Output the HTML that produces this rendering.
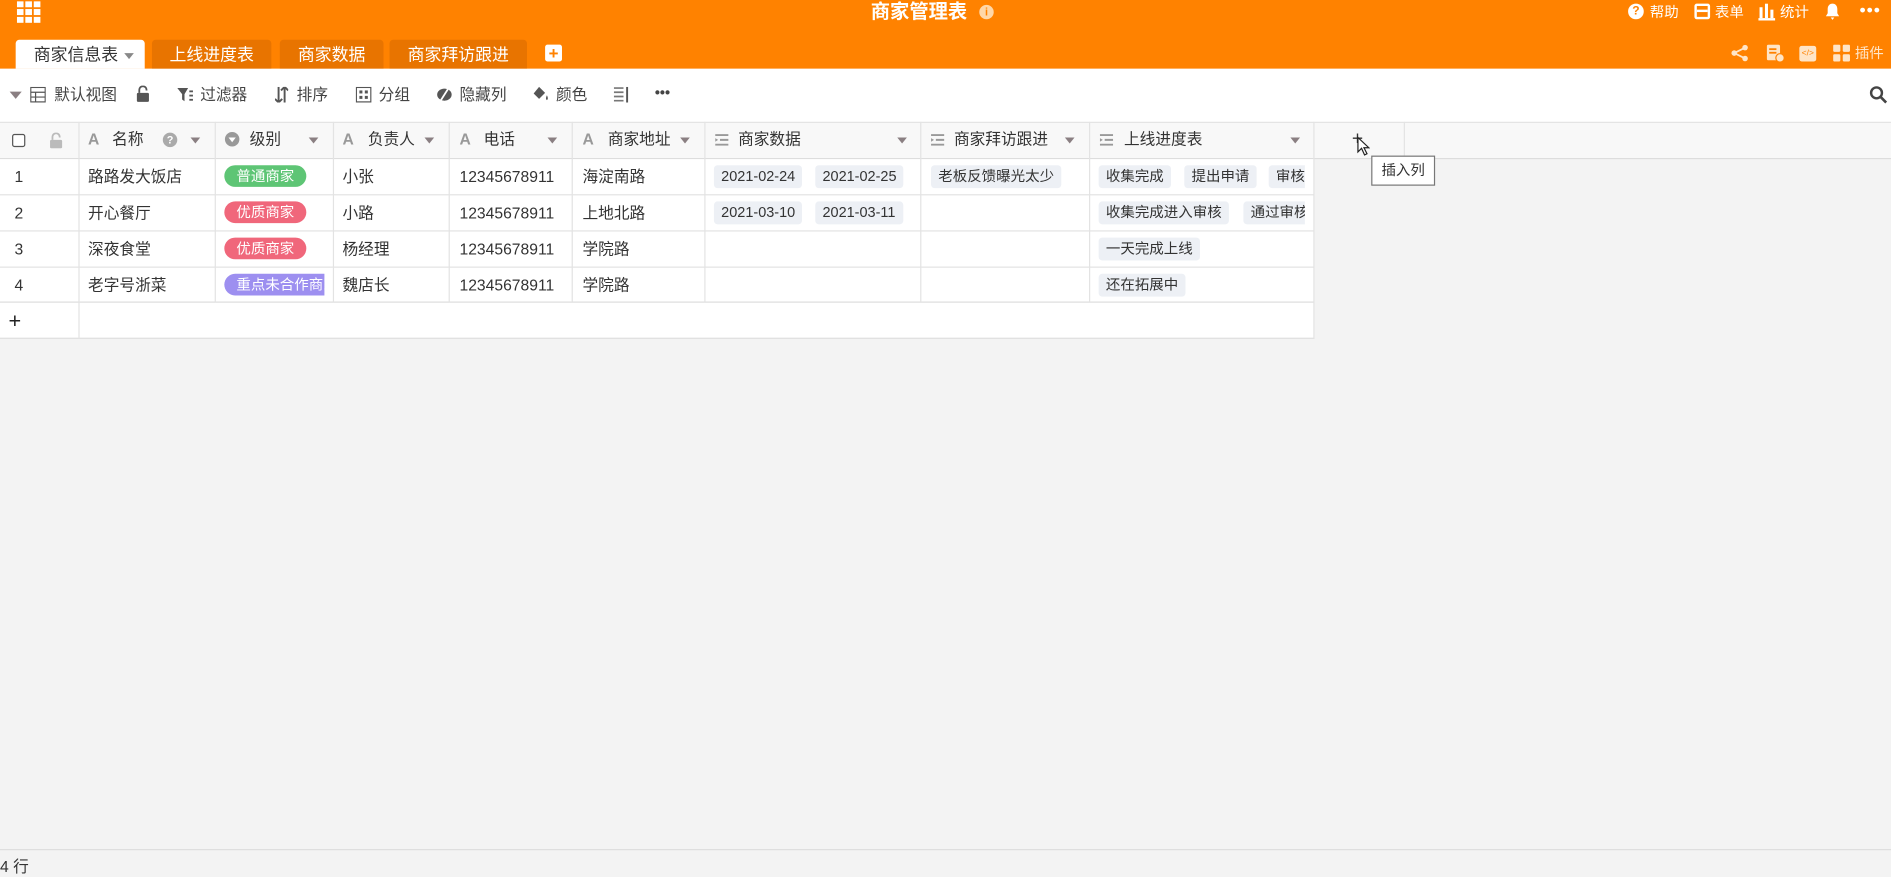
<!DOCTYPE html>
<html><head><meta charset="utf-8"><style>
*{box-sizing:border-box;margin:0;padding:0}
html,body{width:1891px;height:876px;overflow:hidden;background:#f3f3f3}
#w{position:absolute;left:0;top:0;width:1568px;height:726px;transform:scale(1.20599);transform-origin:0 0;font-family:"Liberation Sans","Noto Sans CJK SC",sans-serif;font-size:13px;color:#333}
.a{position:absolute}
.top{left:0;top:0;width:1568px;height:57px;background:#ff8200}
.tab{top:33px;height:24px;line-height:24px;font-size:14px;color:#fff;background:#e87400;border-radius:3px 3px 0 0;text-align:center}
.tb{top:70px;font-size:13px;color:#444;line-height:18px}
.hd{left:0;top:101px;width:1568px;height:31px;background:#f8f8f8;border-top:1px solid #e4e4e4;border-bottom:1px solid #ddd}
.vl{width:1px;background:#e3e3e3}
.hl{height:1px;background:#e3e3e3}
.ht{top:108px;font-size:13px;color:#333;line-height:16px}
.ca{top:108px;width:0;height:0;border-left:4px solid transparent;border-right:4px solid transparent;border-top:5px solid #8a7f82}
.ct{font-size:13px;line-height:16px}
.pill{height:18px;line-height:18px;border-radius:9px;color:#fff;font-size:12px;padding:0 10px;white-space:nowrap;overflow:hidden}
.tg{height:19px;line-height:19px;border-radius:3px;background:#edf0f5;font-size:12px;padding:0 6px;white-space:nowrap;color:#333}
.wi{color:#fff}
</style></head><body><div id="w">
<div class="a top"></div>
<!-- grid logo -->
<svg class="a" style="left:14px;top:1px" width="20" height="18" viewBox="0 0 20 18"><g fill="#fff"><rect x="0" y="0" width="5.5" height="5"/><rect x="7" y="0" width="5.5" height="5"/><rect x="14" y="0" width="5.5" height="5"/><rect x="0" y="6.5" width="5.5" height="5" /><rect x="7" y="6.5" width="5.5" height="5"/><rect x="14" y="6.5" width="5.5" height="5"/><rect x="0" y="13" width="5.5" height="5"/><rect x="7" y="13" width="5.5" height="5"/><rect x="14" y="13" width="5.5" height="5"/></g></svg>
<div class="a" style="left:722px;top:1px;font-size:16px;font-weight:bold;color:#fff;line-height:20px">商家管理表</div>
<div class="a" style="left:812px;top:4px;width:12px;height:12px;border-radius:6px;background:#ffd7a8;color:#ff8200;font-size:9px;line-height:12px;text-align:center;font-weight:bold">i</div>
<!-- right top -->
<div class="a" style="left:1350px;top:3px;width:13px;height:13px;border-radius:7px;background:#fff;color:#ff8200;font-size:10px;line-height:13px;text-align:center;font-weight:bold">?</div>
<div class="a wi" style="left:1368px;top:2px;font-size:12px;line-height:16px">帮助</div>
<div class="a" style="left:1405px;top:3px;width:13px;height:13px;border:2px solid #fff;border-radius:2px"></div>
<div class="a" style="left:1407px;top:8px;width:9px;height:2px;background:#fff"></div>
<div class="a wi" style="left:1422px;top:2px;font-size:12px;line-height:16px">表单</div>
<svg class="a" style="left:1458px;top:3px" width="14" height="14"><g fill="#fff"><rect x="1" y="3" width="2.5" height="9"/><rect x="5.5" y="0" width="2.5" height="12"/><rect x="10" y="5" width="2.5" height="7"/><rect x="0" y="12" width="14" height="2"/></g></svg>
<div class="a wi" style="left:1476px;top:2px;font-size:12px;line-height:16px">统计</div>
<svg class="a" style="left:1513px;top:2px" width="13" height="15"><path d="M6.5 1C4 1 2.5 3 2.5 5.5V9L1 11.5H12L10.5 9V5.5C10.5 3 9 1 6.5 1Z M5 12.5H8L6.5 14.5Z" fill="#fff"/></svg>
<div class="a wi" style="left:1542px;top:0px;font-size:14px;font-weight:bold;letter-spacing:1px">•••</div>
<!-- tabs -->
<div class="a tab" style="left:13px;width:107px;background:#fff;color:#333;text-align:left;padding-left:15px">商家信息表<span style="display:inline-block;margin-left:5px;vertical-align:middle;border-left:4px solid transparent;border-right:4px solid transparent;border-top:5px solid #888"></span></div>
<div class="a tab" style="left:126px;width:99px">上线进度表</div>
<div class="a tab" style="left:232px;width:86px">商家数据</div>
<div class="a tab" style="left:323px;width:114px">商家拜访跟进</div>
<div class="a" style="left:452px;top:37px;width:14px;height:14px;background:#fff;border-radius:2px;color:#ff8200;font-size:14px;line-height:14px;text-align:center;font-weight:bold">+</div>
<!-- right tab icons -->
<svg class="a" style="left:1435px;top:37px" width="15" height="14"><g fill="#ffe5c7"><circle cx="12" cy="2.5" r="2.3"/><circle cx="3" cy="7" r="2.3"/><circle cx="12" cy="11.5" r="2.3"/><path d="M3 7L12 2.5M3 7L12 11.5" stroke="#ffe5c7" stroke-width="1.5"/></g></svg>
<svg class="a" style="left:1465px;top:37px" width="15" height="15"><rect x="0" y="0" width="11" height="13" rx="1.5" fill="#ffe5c7"/><rect x="2" y="3" width="6" height="1.5" fill="#ff8200"/><rect x="2" y="6" width="6" height="1.5" fill="#ff8200"/><circle cx="11" cy="11" r="3.5" fill="#ffe5c7" stroke="#ff8200"/></svg>
<div class="a" style="left:1492px;top:38px;width:14px;height:13px;background:#ffe5c7;border-radius:2px;color:#ff8200;font-size:7px;line-height:13px;text-align:center">&lt;/&gt;</div>
<svg class="a" style="left:1520px;top:37px" width="14" height="14"><g fill="#ffe5c7"><rect x="0" y="0" width="6" height="6" rx="1"/><rect x="8" y="0" width="6" height="6" rx="1"/><rect x="0" y="8" width="6" height="6" rx="1"/><rect x="8" y="8" width="6" height="6" rx="1"/></g></svg>
<div class="a" style="left:1538px;top:36px;font-size:12px;color:#ffe5c7;line-height:16px">插件</div>
<!-- toolbar -->
<div class="a" style="left:0;top:57px;width:1568px;height:44px;background:#fff"></div>
<div class="a" style="left:8px;top:76px;border-left:5px solid transparent;border-right:5px solid transparent;border-top:6px solid #8a7f82"></div>
<svg class="a" style="left:25px;top:72px" width="13" height="13"><rect x="0.5" y="0.5" width="12" height="12" fill="none" stroke="#555"/><path d="M0.5 4.5H12.5M0.5 8.5H12.5M4.5 4.5V12.5" stroke="#555"/></svg>
<div class="a tb" style="left:45px">默认视图</div>
<svg class="a" style="left:113px;top:71px" width="11" height="14"><path d="M2.5 6V3.5a3 3 0 0 1 6 0V4" fill="none" stroke="#555" stroke-width="1.5"/><rect x="0.5" y="6" width="10" height="7.5" rx="1" fill="#555"/></svg>
<svg class="a" style="left:147px;top:72px" width="14" height="13"><path d="M0 1H9L6 6V12L4 10.5V6Z" fill="#555"/><rect x="10" y="3" width="3" height="1.5" fill="#555"/><rect x="10" y="6.5" width="3" height="1.5" fill="#555"/><rect x="10" y="10" width="3" height="1.5" fill="#555"/></svg>
<div class="a tb" style="left:166px">过滤器</div>
<svg class="a" style="left:228px;top:72px" width="11" height="13"><path d="M3 0V13M0 10L3 13L6 10M8 13V0M5 3L8 0L11 3" fill="none" stroke="#555" stroke-width="1.6"/></svg>
<div class="a tb" style="left:246px">排序</div>
<svg class="a" style="left:295px;top:72px" width="13" height="13"><rect x="0.5" y="0.5" width="12" height="12" fill="none" stroke="#555"/><rect x="3" y="3" width="2.5" height="2.5" fill="#555"/><rect x="7.5" y="3" width="2.5" height="2.5" fill="#555"/><rect x="3" y="7.5" width="2.5" height="2.5" fill="#555"/><rect x="7.5" y="7.5" width="2.5" height="2.5" fill="#555"/></svg>
<div class="a tb" style="left:314px">分组</div>
<svg class="a" style="left:362px;top:73px" width="13" height="11"><ellipse cx="6.5" cy="5.5" rx="6" ry="5" fill="#555"/><path d="M10 0L3 11" stroke="#fff" stroke-width="1.5"/></svg>
<div class="a tb" style="left:381px">隐藏列</div>
<svg class="a" style="left:442px;top:71px" width="13" height="14"><path d="M5 1L10 6L5 11L0.5 6.5Z" fill="#555"/><path d="M11.5 8Q13 11 11.5 12Q10 11 11.5 8Z" fill="#555"/></svg>
<div class="a tb" style="left:461px">颜色</div>
<svg class="a" style="left:509px;top:72px" width="13" height="13"><path d="M0 1H8M0 4.5H8M0 8H8M0 11.5H8" stroke="#777" stroke-width="1.4"/><path d="M11 0V13" stroke="#555" stroke-width="1.6"/></svg>
<div class="a" style="left:543px;top:70px;font-size:12px;color:#444;font-weight:bold;letter-spacing:0px">•••</div>
<svg class="a" style="left:1550px;top:71px" width="15" height="15"><circle cx="6" cy="6" r="4.5" fill="none" stroke="#444" stroke-width="2"/><path d="M9.5 9.5L14 14" stroke="#444" stroke-width="2.2"/></svg>
<!-- header row -->
<div class="a hd"></div>
<div class="a" style="left:10px;top:111px;width:11px;height:11px;border:1px solid #555;border-radius:2px;background:#fff"></div>
<svg class="a" style="left:41px;top:110px" width="11" height="13"><path d="M2.5 6V3.5a3 3 0 0 1 6 0V4" fill="none" stroke="#bbb" stroke-width="1.5"/><rect x="0.5" y="6" width="10" height="7" rx="1" fill="#bbb"/></svg>
<!-- column header texts -->
<div class="a ht" style="left:73px;color:#999;font-weight:bold">A</div><div class="a ht" style="left:93px">名称</div>
<div class="a" style="left:135px;top:110px;width:12px;height:12px;border-radius:6px;background:#aaa;color:#fff;font-size:9px;line-height:12px;text-align:center;font-weight:bold">?</div>
<div class="a ca" style="left:158px;top:114px"></div>
<svg class="a" style="left:186px;top:109px" width="13" height="13"><circle cx="6.5" cy="6.5" r="6" fill="#999"/><path d="M3.5 5H9.5L6.5 9Z" fill="#fff"/></svg>
<div class="a ht" style="left:207px">级别</div><div class="a ca" style="left:256px;top:114px"></div>
<div class="a ht" style="left:284px;color:#999;font-weight:bold">A</div><div class="a ht" style="left:305px">负责人</div><div class="a ca" style="left:352px;top:114px"></div>
<div class="a ht" style="left:381px;color:#999;font-weight:bold">A</div><div class="a ht" style="left:401px">电话</div><div class="a ca" style="left:454px;top:114px"></div>
<div class="a ht" style="left:483px;color:#999;font-weight:bold">A</div><div class="a ht" style="left:504px">商家地址</div><div class="a ca" style="left:564px;top:114px"></div>
<svg class="a" style="left:593px;top:111px" width="11" height="10"><path d="M0 1H11M4 5H11M0 9H11" stroke="#999" stroke-width="1.6"/><path d="M0 3.5L2.5 5L0 6.5Z" fill="#999"/></svg>
<div class="a ht" style="left:612px">商家数据</div><div class="a ca" style="left:744px;top:114px"></div>
<svg class="a" style="left:772px;top:111px" width="11" height="10"><path d="M0 1H11M4 5H11M0 9H11" stroke="#999" stroke-width="1.6"/><path d="M0 3.5L2.5 5L0 6.5Z" fill="#999"/></svg>
<div class="a ht" style="left:791px">商家拜访跟进</div><div class="a ca" style="left:883px;top:114px"></div>
<svg class="a" style="left:912px;top:111px" width="11" height="10"><path d="M0 1H11M4 5H11M0 9H11" stroke="#999" stroke-width="1.6"/><path d="M0 3.5L2.5 5L0 6.5Z" fill="#999"/></svg>
<div class="a ht" style="left:932px">上线进度表</div><div class="a ca" style="left:1070px;top:114px"></div>
<div class="a" style="left:1121px;top:109px;font-size:16px;color:#333;line-height:14px">+</div>
<svg class="a" style="left:1125px;top:113px" width="11" height="17"><path d="M1 1V13L4 10L6.5 15.5L8.5 14.5L6 9.5H10Z" fill="#fff" stroke="#222" stroke-width="1"/></svg>
<!-- table body -->
<div class="a" style="left:0;top:132px;width:1090px;height:149px;background:#fff;border-bottom:1px solid #ddd"></div>
<div class="a hl" style="left:0;top:161px;width:1090px"></div>
<div class="a hl" style="left:0;top:191px;width:1090px"></div>
<div class="a hl" style="left:0;top:221px;width:1090px"></div>
<div class="a hl" style="left:0;top:250px;width:1090px;background:#ddd"></div>
<!-- vertical lines -->
<div class="a vl" style="left:65px;top:101px;height:180px"></div>
<div class="a vl" style="left:178px;top:101px;height:150px"></div>
<div class="a vl" style="left:276px;top:101px;height:150px"></div>
<div class="a vl" style="left:372px;top:101px;height:150px"></div>
<div class="a vl" style="left:474px;top:101px;height:150px"></div>
<div class="a vl" style="left:584px;top:101px;height:150px"></div>
<div class="a vl" style="left:763px;top:101px;height:150px"></div>
<div class="a vl" style="left:903px;top:101px;height:150px"></div>
<div class="a vl" style="left:1089px;top:101px;height:180px"></div>
<div class="a vl" style="left:1164px;top:101px;height:31px"></div>
<!-- rows -->
<div class="a ct" style="left:12px;top:139px">1</div>
<div class="a ct" style="left:12px;top:169px">2</div>
<div class="a ct" style="left:12px;top:199px">3</div>
<div class="a ct" style="left:12px;top:229px">4</div>
<div class="a" style="left:7px;top:256px;font-size:18px;line-height:20px;color:#222">+</div>
<div class="a ct" style="left:73px;top:139px">路路发大饭店</div>
<div class="a ct" style="left:73px;top:169px">开心餐厅</div>
<div class="a ct" style="left:73px;top:199px">深夜食堂</div>
<div class="a ct" style="left:73px;top:229px">老字号浙菜</div>
<div class="a pill" style="left:186px;top:137px;background:#5ec575">普通商家</div>
<div class="a pill" style="left:186px;top:167px;background:#f0677b">优质商家</div>
<div class="a pill" style="left:186px;top:197px;background:#f0677b">优质商家</div>
<div class="a pill" style="left:186px;top:227px;width:83px;background:#9d8ff0;border-radius:9px 0 0 9px">重点未合作商家</div>
<div class="a ct" style="left:284px;top:139px">小张</div>
<div class="a ct" style="left:284px;top:169px">小路</div>
<div class="a ct" style="left:284px;top:199px">杨经理</div>
<div class="a ct" style="left:284px;top:229px">魏店长</div>
<div class="a ct" style="left:381px;top:139px">12345678911</div>
<div class="a ct" style="left:381px;top:169px">12345678911</div>
<div class="a ct" style="left:381px;top:199px">12345678911</div>
<div class="a ct" style="left:381px;top:229px">12345678911</div>
<div class="a ct" style="left:483px;top:139px">海淀南路</div>
<div class="a ct" style="left:483px;top:169px">上地北路</div>
<div class="a ct" style="left:483px;top:199px">学院路</div>
<div class="a ct" style="left:483px;top:229px">学院路</div>
<div class="a tg" style="left:592px;top:137px">2021-02-24</div>
<div class="a tg" style="left:676px;top:137px">2021-02-25</div>
<div class="a tg" style="left:592px;top:167px">2021-03-10</div>
<div class="a tg" style="left:676px;top:167px">2021-03-11</div>
<div class="a tg" style="left:772px;top:137px">老板反馈曝光太少</div>
<div style="position:absolute;left:904px;top:132px;width:178px;height:118px;overflow:hidden">
<div class="a tg" style="left:7px;top:5px">收集完成</div>
<div class="a tg" style="left:78px;top:5px">提出申请</div>
<div class="a tg" style="left:148px;top:5px">审核</div>
<div class="a tg" style="left:7px;top:35px">收集完成进入审核</div>
<div class="a tg" style="left:127px;top:35px">通过审核</div>
<div class="a tg" style="left:7px;top:65px">一天完成上线</div>
<div class="a tg" style="left:7px;top:95px">还在拓展中</div>
</div>
<!-- tooltip -->
<div class="a" style="left:1137px;top:129px;width:53px;height:25px;background:#fff;border:1px solid #777;font-size:12px;line-height:23px;text-align:center;color:#333">插入列</div>
<!-- footer -->
<div class="a hl" style="left:0;top:704px;width:1568px;background:#ddd"></div>
<div class="a" style="left:0;top:711px;font-size:13px;line-height:16px;color:#333">4 行</div>
</div></body></html>
